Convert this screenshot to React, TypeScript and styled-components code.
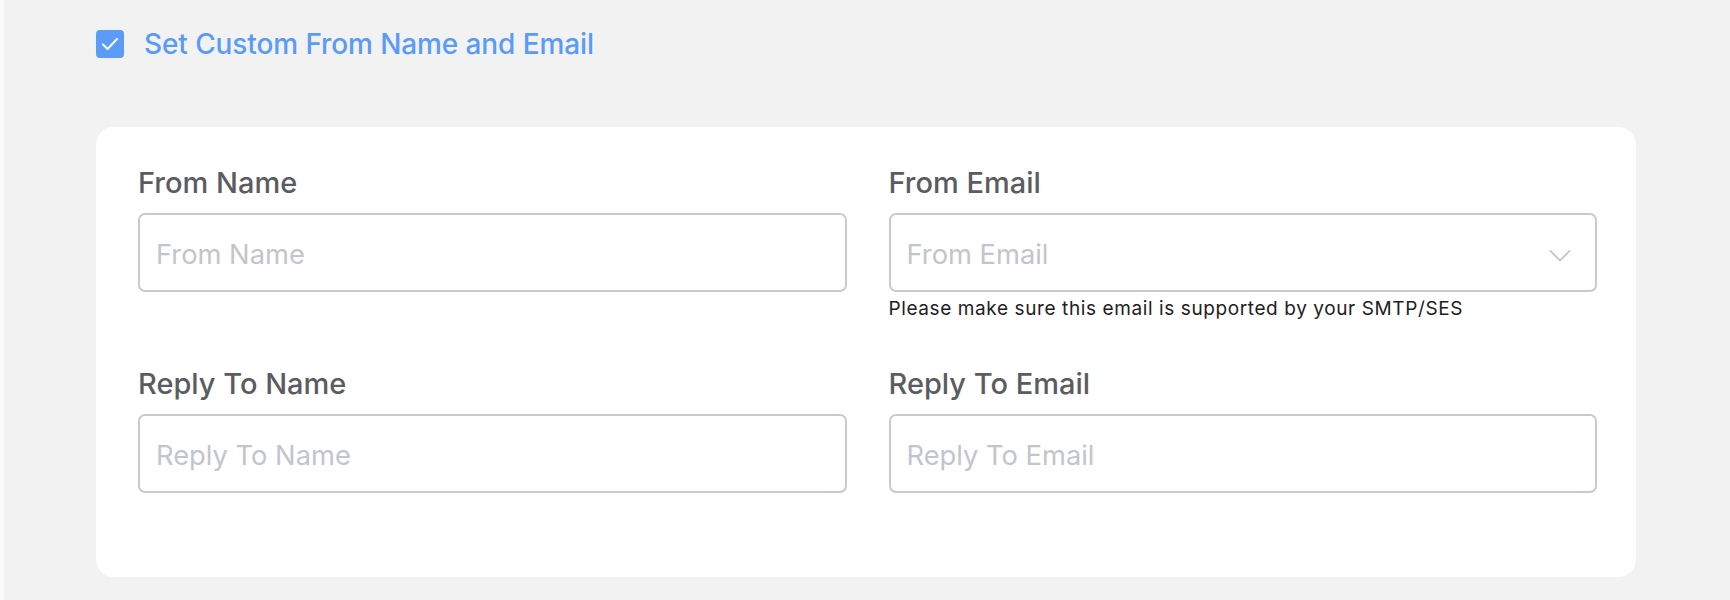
import React from "react";
import styled, { createGlobalStyle } from "styled-components";

const GlobalStyle = createGlobalStyle`
  html, body {
    margin: 0;
    padding: 0;
    background: #fafafa;
  }
  body {
    font-family: Inter, "Noto Sans", "Liberation Sans", sans-serif;
    -webkit-font-smoothing: antialiased;
  }
  * { box-sizing: border-box; }
`;

const Page = styled.div`
  display: flex;
  min-height: 100vh;
`;

const EdgeStrip = styled.div`
  width: 4px;
  flex: 0 0 4px;
  background: #fafafa;
`;

const Main = styled.main`
  flex: 1;
  background: #f2f2f2;
  padding: 30px 94px 23px 92px;
`;

const ToggleRow = styled.label`
  display: flex;
  align-items: center;
  gap: 20px;
  height: 28px;
  margin-bottom: 69px;
  cursor: pointer;
`;

const CheckBox = styled.span`
  width: 28px;
  height: 28px;
  border-radius: 4px;
  background: #5b9cf8;
  display: flex;
  align-items: center;
  justify-content: center;
`;

const ToggleText = styled.span`
  font-size: 28px;
  font-weight: 500;
  color: #5a9bf7;
  letter-spacing: -0.1px;
  line-height: 32px;
`;

const Card = styled.section`
  background: #ffffff;
  border-radius: 18px;
  padding: 40px 39px 84px 42px;
  display: grid;
  grid-template-columns: 1fr 1fr;
  column-gap: 42px;
  row-gap: 47px;
  align-items: start;
`;

const Field = styled.div`
  display: flex;
  flex-direction: column;
`;

const Label = styled.div`
  font-size: 29px;
  font-weight: 500;
  line-height: 32px;
  color: #5b5c61;
  margin-bottom: 14px;
`;

const InputBox = styled.div`
  position: relative;
  height: 79px;
  border: 2px solid #c7cad0;
  border-radius: 7px;
  background: #fff;
  display: flex;
  align-items: center;
`;

const TextInput = styled.input`
  width: 100%;
  height: 100%;
  border: none;
  outline: none;
  background: transparent;
  padding: 3px 60px 0 16px;
  font-family: Inter, "Noto Sans", "Liberation Sans", sans-serif;
  font-size: 27.3px;
  color: #333;
  &::placeholder {
    color: #c2c5cc;
  }
`;

const Chevron = styled.svg`
  position: absolute;
  right: 24px;
  top: 50%;
  margin-top: -4px;
`;

const HelpText = styled.div`
  margin-top: 5px;
  font-size: 19px;
  letter-spacing: 0.6px;
  line-height: 24px;
  color: #1f2023;
`;

type FieldProps = { label: string; select?: boolean; help?: string };

const FormField = ({ label, select, help }: FieldProps) => (
  <Field>
    <Label>{label}</Label>
    <InputBox>
      <TextInput placeholder={label} />
      {select && (
        <Chevron width="22" height="13" viewBox="0 0 22 13" fill="none">
          <polyline
            points="1,1.5 11,11.5 21,1.5"
            stroke="#b8bbc3"
            strokeWidth="1.5"
            fill="none"
          />
        </Chevron>
      )}
    </InputBox>
    {help && <HelpText>{help}</HelpText>}
  </Field>
);

export default function App() {
  return (
    <>
      <GlobalStyle />
      <Page>
        <EdgeStrip />
        <Main>
          <ToggleRow>
            <CheckBox>
              <svg width="28" height="28" viewBox="0 0 28 28" fill="none">
                <polyline
                  points="7,14.5 11.5,19 21,9"
                  stroke="#ffffff"
                  strokeWidth="2"
                  strokeLinecap="round"
                  strokeLinejoin="round"
                  fill="none"
                />
              </svg>
            </CheckBox>
            <ToggleText>Set Custom From Name and Email</ToggleText>
          </ToggleRow>
          <Card>
            <FormField label="From Name" />
            <FormField
              label="From Email"
              select
              help="Please make sure this email is supported by your SMTP/SES"
            />
            <FormField label="Reply To Name" />
            <FormField label="Reply To Email" />
          </Card>
        </Main>
      </Page>
    </>
  );
}
